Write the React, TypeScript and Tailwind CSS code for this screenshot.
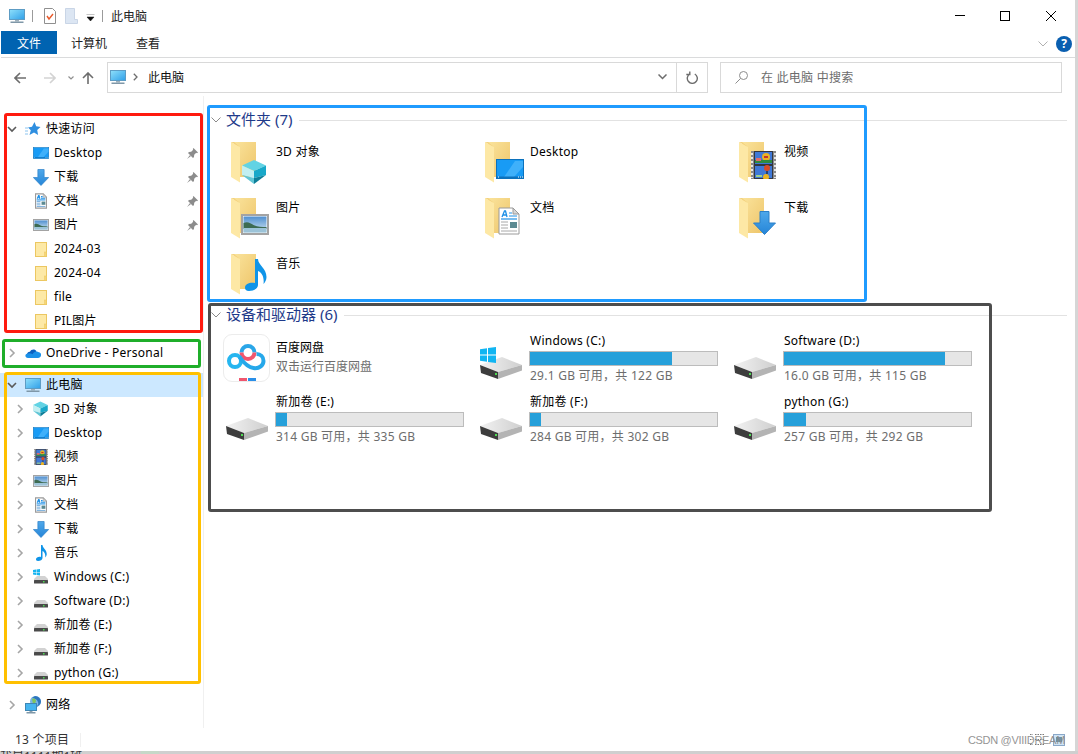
import React from 'react';

const FONT = "font-['Noto_Sans','Noto_Sans_CJK_SC',sans-serif]";

function Chevron({ open }: { open?: boolean }) {
  return open ? (
    <svg width="12" height="12" viewBox="0 0 12 12" fill="none" stroke="#5a5a5a" strokeWidth="1.6">
      <path d="M2 4l4 4 4-4" />
    </svg>
  ) : (
    <svg width="12" height="12" viewBox="0 0 12 12" fill="none" stroke="#a6a6a6" strokeWidth="1.6">
      <path d="M4 2l4 4-4 4" />
    </svg>
  );
}

function PcIcon({ className }: { className?: string }) {
  return (
    <svg className={className} width="16" height="16" viewBox="0 0 16 16">
      <defs>
        <linearGradient id="pc" x1="0" y1="0" x2="1" y2="1">
          <stop offset="0" stopColor="#8fe0fb" />
          <stop offset="1" stopColor="#2f9fe8" />
        </linearGradient>
      </defs>
      <rect x="0.5" y="1.5" width="15" height="10" fill="url(#pc)" stroke="#5d9cc4" />
      <rect x="6" y="12" width="4" height="1.5" fill="#9fb0bb" />
      <rect x="1.5" y="13.5" width="13" height="1.5" fill="#7f97a8" />
    </svg>
  );
}

function DesktopGlyph({ w = 28, h = 20 }: { w?: number; h?: number }) {
  return (
    <svg width={w} height={h} viewBox="0 0 28 20">
      <rect x="0.5" y="0.5" width="27" height="19" fill="#189bf5" stroke="#0c72bd" />
      <path d="M8 18L19 2h8v6L18 18z" fill="#3fb0fa" />
      <rect x="1" y="17.5" width="26" height="1.5" fill="#0c72bd" />
      <path d="M2 18h1M22 18h1M24 18h1M26 18h1" stroke="#fff" strokeWidth="1" />
    </svg>
  );
}

function CubeGlyph({ w = 26, h = 24 }: { w?: number; h?: number }) {
  return (
    <svg width={w} height={h} viewBox="0 0 26 24">
      <path d="M12 0l12 5.5L12 11 0 5.5z" fill="#62d3e4" />
      <path d="M0 5.5L12 11v7L0 15z" fill="#c2eff2" />
      <path d="M24 5.5L12 11v7l12-3z" fill="#18a8c9" />
      <path d="M0 15l12 3v6z" fill="#62c6d6" />
      <path d="M24 15l-12 3v6z" fill="#0e7f99" />
    </svg>
  );
}

function FilmGlyph({ w = 25, h = 28 }: { w?: number; h?: number }) {
  return (
    <svg width={w} height={h} viewBox="0 0 25 28">
      <rect x="0" y="0" width="25" height="28" fill="#8a8a8a" />
      <rect x="3" y="0" width="19" height="28" fill="#33363f" />
      <rect x="4" y="1" width="17" height="12" fill="#3f78d6" />
      <rect x="4" y="15" width="17" height="12" fill="#3f78d6" />
      <circle cx="15" cy="6" r="4" fill="#e9b322" />
      <rect x="13" y="5" width="4" height="2" fill="#c7322a" />
      <rect x="4" y="9" width="17" height="3" fill="#2e8b3d" />
      <rect x="5" y="7" width="5" height="3" fill="#e06a6a" />
      <circle cx="16" cy="17" r="3" fill="#d84a26" />
      <path d="M15.5 20h1v3h-1z" fill="#111" />
      <circle cx="15" cy="26" r="3" fill="#e9b322" />
      <rect x="5" y="24" width="6" height="2" fill="#9ed08a" />
      <path d="M1 2v2M1 6v2M1 10v2M1 14v2M1 18v2M1 22v2M1 26v1M24 2v2M24 6v2M24 10v2M24 14v2M24 18v2M24 22v2M24 26v1" stroke="#e6e6e6" strokeWidth="2" />
    </svg>
  );
}

function PictureGlyph({ w = 28, h = 21 }: { w?: number; h?: number }) {
  return (
    <svg width={w} height={h} viewBox="0 0 28 21">
      <defs>
        <linearGradient id="sky" x1="0" y1="0" x2="0" y2="1">
          <stop offset="0" stopColor="#4f8fd0" />
          <stop offset="1" stopColor="#d3e7f2" />
        </linearGradient>
      </defs>
      <rect x="1" y="1" width="26" height="19" fill="#fff" stroke="#a3a3a3" strokeWidth="2" />
      <rect x="2.5" y="2.5" width="23" height="16" fill="url(#sky)" />
      <path d="M2.500 9c4-2 7 0 10 2 4 2 8 2 13 2v2h-23z" fill="#3d6b52" />
      <rect x="2.5" y="14" width="23" height="4.500" fill="#9cc3d8" />
    </svg>
  );
}

function DocGlyph({ w = 22, h = 28, small }: { w?: number; h?: number; small?: boolean }) {
  return (
    <svg width={w} height={h} viewBox="0 0 22 28">
      <path d="M1 1H15L21 7V27H1z" fill="#fff" stroke="#9a9a9a" strokeWidth={small ? 2 : 1} />
      <path d="M15 1V7H21z" fill="#d6d6d6" stroke="#9a9a9a" />
      <path d="M4 10l2.500-6h1L9 10M5 8h3.500" stroke="#1e90e6" strokeWidth={small ? 2 : 1.3} fill="none" />
      <path d="M11 6h3M11 9h8" stroke="#1e90e6" strokeWidth={small ? 2 : 1} />
      <path d="M3 12h16" stroke="#1e90e6" strokeWidth={small ? 2 : 1.2} />
      <path d="M3 15h7M3 18h7M3 21h7M3 24h16" stroke={small ? '#6aa5d8' : '#a8a8a8'} strokeWidth={small ? 1.6 : 1} />
      <rect x="12" y="15" width="7" height="6" fill="#5c8a92" />
    </svg>
  );
}

function MusicGlyph({ w = 22, h = 32 }: { w?: number; h?: number }) {
  return (
    <svg width={w} height={h} viewBox="0 0 22 32">
      <path d="M10 0h3c0 6 8.500 9 8.500 18 0 3-1.500 5.500-3 7 1-7-2-12-5.500-13v14c0 3.500-4.500 6-9 6-3 0-4-1.500-4-3.500 0-3.500 5-5.500 10-4.500z" fill="#0f94e8" />
    </svg>
  );
}

function DownloadGlyph({ w = 23, h = 24 }: { w?: number; h?: number }) {
  return (
    <svg width={w} height={h} viewBox="0 0 23 24">
      <defs>
        <linearGradient id="dl" x1="0" y1="0" x2="0" y2="1">
          <stop offset="0" stopColor="#4fa8ea" />
          <stop offset="1" stopColor="#2585d8" />
        </linearGradient>
      </defs>
      <path d="M7 0.500h9V12h6.500L11.500 23.500 0.500 12H7z" fill="url(#dl)" stroke="#2c80c8" />
    </svg>
  );
}

function SmallFolder() {
  return (
    <svg width="12" height="15" viewBox="0 0 12 15">
      <rect x="0.500" y="0.500" width="11" height="14" fill="#fde9a6" stroke="#ecc761" />
      <rect x="9.500" y="10" width="2" height="4.500" fill="#f6d677" stroke="#ecc761" strokeWidth="0.500" />
    </svg>
  );
}

function SmallDrive({ win }: { win?: boolean }) {
  return (
    <svg width="16" height="16" viewBox="0 0 16 16">
      {win && <path d="M0 1l3-.500V3H0zM3.500 0.400L7 0v3H3.500zM0 3.500h3V6L0 5.500zM3.500 3.500H7V6.500L3.500 6z" fill="#15b4f0" />}
      <path d="M4 7h8l3 3v1H1v-1z" fill="#d2d2d2" />
      <rect x="1" y="11" width="14" height="3.500" rx="0.500" fill="#4a4a4a" />
      <rect x="10" y="12" width="1.500" height="1.500" fill="#4ddb52" />
    </svg>
  );
}

function Cloud() {
  return (
    <svg width="16" height="16" viewBox="0 0 16 16">
      <path d="M2 10.500C1.500 8 3.500 6.500 5 6.800 6 4 10 3.500 11.500 6.200L7 11z" fill="#0a5fc0" />
      <path d="M3 13c-3 0-3.500-3.500-1-4.200C3.500 8 6 8 7.500 9.200 9 7 11 6 13 7c2.500.2 3.500 2 3 3.500-.2 1.500-1.500 2.500-3 2.500z" fill="#1a90e8" />
    </svg>
  );
}

function Network() {
  return (
    <svg width="16" height="18" viewBox="0 0 16 18">
      <circle cx="10.500" cy="5.500" r="5.500" fill="#7ab4e6" />
      <path d="M7 2c2 0 5 1 6 4s-1 4-2 5c3-1 5-3 5-5.500S13 0 10 0z" fill="#2d76bd" />
      <path d="M7 3c2-1 4 0 4 2s-2 2-3 3z" fill="#7fc45e" />
      <rect x="0.500" y="7.500" width="11" height="7" fill="#45b4ef" stroke="#3e87b5" />
      <rect x="4.500" y="15" width="3" height="1" fill="#8ea1ad" />
      <rect x="1.500" y="16" width="9" height="1.500" fill="#7f97a8" />
    </svg>
  );
}

function Pin() {
  return (
    <svg width="11" height="11" viewBox="0 0 11 11" fill="#8c8c8c">
      <path d="M6.500 0L11 4.500 10 5.200 9.200 4.800 7.200 6.800 7 9 6 10 1 5l1-1 2.200-.200 2-2-.400-.800z" />
      <path d="M0 11l3-4 1 1z" />
    </svg>
  );
}

function Star() {
  return (
    <svg width="16" height="16" viewBox="0 0 16 16">
      <path d="M9.500 1l1.700 4.300L15.500 6l-3.300 3 .9 5-4.100-2.500L4.500 14l1.300-4.800L3 6.500l4-.8z" fill="#2f8fe0" />
      <path d="M0 7h3M0 10h3M0 13h3" stroke="#8cc4ef" strokeWidth="1" />
    </svg>
  );
}

function LargeFolder({ children }: { children?: React.ReactNode }) {
  return (
    <div className="relative w-[44px] h-[44px] ml-[3px] mt-[4px] mr-[1px] shrink-0">
      <svg width="26" height="41" viewBox="0 0 26 41">
        <defs>
          <linearGradient id="fb" x1="0" y1="0" x2="1" y2="1">
            <stop offset="0" stopColor="#fae39b" />
            <stop offset="1" stopColor="#eec56a" />
          </linearGradient>
        </defs>
        <rect x="3" y="0" width="22" height="35" fill="url(#fb)" />
        <path d="M0 0l9 5v35.500L0 35z" fill="#fde8a5" />
        <path d="M0 0h3l6 5z" fill="#f3d27e" />
      </svg>
      {children}
    </div>
  );
}

function Ring({ className }: { className: string }) {
  return <div className={className} />;
}

function SidebarRow({
  level,
  chevron,
  icon,
  label,
  pin,
  selected,
}: {
  level: 0 | 1;
  chevron?: 'open' | 'closed';
  icon: React.ReactNode;
  label: string;
  pin?: boolean;
  selected?: boolean;
}) {
  return (
    <div
      className={`flex items-center h-6 text-[12px] text-black ${level === 0 ? 'pl-[6px]' : 'pl-[14px]'} ${
        selected ? 'bg-[#cce8ff]' : ''
      }`}
    >
      <div className="w-3 h-3 shrink-0">{chevron && <Chevron open={chevron === 'open'} />}</div>
      <div className="w-4 ml-[7px] flex justify-center shrink-0">{icon}</div>
      <span className="ml-[5px] whitespace-nowrap tracking-[0.25px]">{label}</span>
      {pin && (
        <span className="ml-auto mr-[5px]">
          <Pin />
        </span>
      )}
    </div>
  );
}

const quickAccess = [
  { icon: <DesktopGlyph w={16} h={12} />, label: 'Desktop', pin: true },
  { icon: <DownloadGlyph w={16} h={17} />, label: '下载', pin: true },
  { icon: <DocGlyph w={12} h={16} small />, label: '文档', pin: true },
  { icon: <PictureGlyph w={16} h={12} />, label: '图片', pin: true },
  { icon: <SmallFolder />, label: '2024-03' },
  { icon: <SmallFolder />, label: '2024-04' },
  { icon: <SmallFolder />, label: 'file' },
  { icon: <SmallFolder />, label: 'PIL图片' },
];

const pcItems = [
  { icon: <CubeGlyph w={16} h={16} />, label: '3D 对象' },
  { icon: <DesktopGlyph w={16} h={12} />, label: 'Desktop' },
  { icon: <FilmGlyph w={14} h={16} />, label: '视频' },
  { icon: <PictureGlyph w={16} h={12} />, label: '图片' },
  { icon: <DocGlyph w={12} h={16} small />, label: '文档' },
  { icon: <DownloadGlyph w={16} h={17} />, label: '下载' },
  { icon: <MusicGlyph w={11} h={16} />, label: '音乐' },
  { icon: <SmallDrive win />, label: 'Windows (C:)' },
  { icon: <SmallDrive />, label: 'Software (D:)' },
  { icon: <SmallDrive />, label: '新加卷 (E:)' },
  { icon: <SmallDrive />, label: '新加卷 (F:)' },
  { icon: <SmallDrive />, label: 'python (G:)' },
];

const folders = [
  { label: '3D 对象', overlay: <div className="absolute left-[11px] top-[18px]"><CubeGlyph /></div> },
  { label: 'Desktop', overlay: <div className="absolute left-[11px] top-[17px]"><DesktopGlyph /></div> },
  { label: '视频', overlay: <div className="absolute left-[12px] top-[9px]"><FilmGlyph /></div> },
  { label: '图片', overlay: <div className="absolute left-[10px] top-[16px]"><PictureGlyph /></div> },
  { label: '文档', overlay: <div className="absolute left-[13px] top-[9px]"><DocGlyph /></div> },
  { label: '下载', overlay: <div className="absolute left-[14px] top-[13px]"><DownloadGlyph /></div> },
  { label: '音乐', overlay: <div className="absolute left-[14px] top-[5px]"><MusicGlyph /></div> },
];

const drives = [
  { name: 'Windows (C:)', used: 76, usage: '29.1 GB 可用，共 122 GB', win: true },
  { name: 'Software (D:)', used: 86, usage: '16.0 GB 可用，共 115 GB' },
  { name: '新加卷 (E:)', used: 6, usage: '314 GB 可用，共 335 GB' },
  { name: '新加卷 (F:)', used: 6, usage: '284 GB 可用，共 302 GB' },
  { name: 'python (G:)', used: 12, usage: '257 GB 可用，共 292 GB' },
];

function LargeDrive() {
  return (
    <svg width="42" height="22" viewBox="0 0 42 22" className="-ml-[2px] mt-[25px]">
      <defs>
        <linearGradient id="dt" x1="0" y1="0" x2="1" y2="0">
          <stop offset="0" stopColor="#f2f2f2" />
          <stop offset="1" stopColor="#cfcfcf" />
        </linearGradient>
      </defs>
      <path d="M0 8L22 0l20 8-24 7z" fill="url(#dt)" />
      <path d="M0 8l18 7v7L1 16z" fill="#3d3d3d" />
      <path d="M18 15l24-7v5.500L18 22z" fill="#b4b4b4" />
      <rect x="15" y="16" width="2" height="2" fill="#4ddb52" />
    </svg>
  );
}

function BaiduLogo() {
  return (
    <div className="w-[47px] h-[48px] -ml-[5px] mt-[2px] rounded-[9px] border border-[#ececec] bg-white overflow-hidden shrink-0">
      <svg width="45" height="46" viewBox="0 0 45 46" fill="none">
        <path d="M17.500 17.500a6.500 6.500 0 0 1 13 0" stroke="#2aa6e8" strokeWidth="4" />
        <path d="M30.500 17.500a6.500 6.500 0 0 1-13 0" stroke="#f0566e" strokeWidth="4" />
        <circle cx="11" cy="26" r="6" stroke="#26b6f0" strokeWidth="4" />
        <path d="M15.500 22c3 4 7 10 14 11 6 1 10-3 10-7 0-4-3-7-7-7" stroke="#26a8ea" strokeWidth="4" />
        <rect x="15" y="43" width="8" height="3" fill="#f0566e" />
        <rect x="24" y="43" width="8" height="3" fill="#2a8fe8" />
      </svg>
    </div>
  );
}

function GroupHeader({ title }: { title: string }) {
  return (
    <div className="flex items-center h-6">
      <svg width="10" height="6" viewBox="0 0 10 6" fill="none" stroke="#8a8a8a" strokeWidth="1">
        <path d="M.5.500L5 5 9.500.500" />
      </svg>
      <span className="ml-[5px] -mt-[2px] text-[15px] text-[#1e3a8a] whitespace-nowrap">{title}</span>
      <div className="flex-1 ml-[7px] h-px bg-[#e2e2e2]" />
    </div>
  );
}

export default function App() {
  return (
    <div className={`w-[1078px] h-[754px] overflow-hidden bg-[#d6d6d6] flex flex-col ${FONT}`}>
      <div className="flex h-[751px] shrink-0">
        <div className="w-[1075px] bg-white flex flex-col">
          {/* title bar */}
          <div className="h-[31px] flex items-center shrink-0">
            <PcIcon className="ml-[9px]" />
            <div className="w-px h-[12px] bg-[#9b9b9b] ml-[7px]" />
            <svg width="12" height="16" viewBox="0 0 12 16" className="ml-[11px]">
              <path d="M.5.500h8l3 3v12H.5z" fill="#fff" stroke="#8f8f8f" />
              <path d="M3 8l2 3 4-5" stroke="#e8592a" strokeWidth="1.400" fill="none" />
            </svg>
            <svg width="13" height="16" viewBox="0 0 13 16" className="ml-[9px]">
              <path d="M.5.500h9v11h3v4H.5z" fill="#dce6f3" stroke="#c9d5e6" />
            </svg>
            <svg width="9" height="7" viewBox="0 0 9 7" className="ml-[8px] mt-[3px]">
              <path d="M.5 0h8M1 3h7L4.500 7z" fill="#111" stroke="#111" strokeWidth="0.500" />
            </svg>
            <div className="w-px h-[12px] bg-[#9b9b9b] ml-[7px]" />
            <span className="ml-[8px] mt-[2px] text-[12px] text-[#222]">此电脑</span>
            <div className="ml-auto flex items-center mr-[19px] gap-[35px]">
              <div className="w-[10px] h-px bg-black" />
              <div className="w-[10px] h-[10px] border border-black" />
              <svg width="10" height="10" viewBox="0 0 10 10" stroke="#000" strokeWidth="1" className="ml-[1px]">
                <path d="M0 0l10 10M10 0L0 10" />
              </svg>
            </div>
          </div>

          {/* ribbon tabs */}
          <div className="h-[27px] shrink-0 flex border-b border-[#dadbdc] ml-px text-[12px]">
            <div className="w-[56px] h-[23px] pt-[2px] bg-[#0063b1] text-white flex items-center justify-center">文件</div>
            <div className="ml-[14px] h-[23px] pt-[2px] flex items-center text-[#222]">计算机</div>
            <div className="ml-[29px] h-[23px] pt-[2px] flex items-center text-[#222]">查看</div>
            <div className="ml-auto flex items-center h-[23px] mr-[3px] mt-[1px]">
              <svg width="10" height="6" viewBox="0 0 10 6" fill="none" stroke="#b0b0b0">
                <path d="M.5.500L5 5 9.500.500" />
              </svg>
              <div className="ml-[8px] w-4 h-4 rounded-full bg-[#0a5fb0] text-white text-[12px] font-bold flex items-center justify-center">?</div>
            </div>
          </div>

          {/* address row */}
          <div className="h-[38px] shrink-0 flex items-center">
            <div className="w-[107px] flex items-center shrink-0 pl-[14px] pt-[2px]">
              <svg width="12" height="12" viewBox="0 0 12 12" fill="none" stroke="#6d6d6d" strokeWidth="1.600">
                <path d="M12 6H1M6 1L1 6l5 5" />
              </svg>
              <svg width="12" height="12" viewBox="0 0 12 12" fill="none" stroke="#d3d3d3" strokeWidth="1.600" className="ml-[18px]">
                <path d="M0 6h11M6 1l5 5-5 5" />
              </svg>
              <svg width="6" height="4" viewBox="0 0 6 4" fill="none" stroke="#8f8f8f" strokeWidth="1.200" className="ml-[12px]">
                <path d="M.5.500L3 3 5.500.500" />
              </svg>
              <svg width="12" height="12" viewBox="0 0 12 12" fill="none" stroke="#6d6d6d" strokeWidth="1.600" className="ml-[8px]">
                <path d="M6 12V1M1 6l5-5 5 5" />
              </svg>
            </div>
            <div className="w-[601px] h-[31px] border border-[#d9d9d9] flex items-center shrink-0 text-[12px]">
              <PcIcon className="ml-[2px]" />
              <svg width="5" height="8" viewBox="0 0 5 8" fill="none" stroke="#6d6d6d" strokeWidth="1.300" className="ml-[7px]">
                <path d="M.8.800L4 4 .8 7.200" />
              </svg>
              <span className="ml-[10px] mt-[2px] text-[#111]">此电脑</span>
              <svg width="9" height="6" viewBox="0 0 9 6" fill="none" stroke="#6d6d6d" strokeWidth="1.500" className="ml-auto mr-[9px]">
                <path d="M.5.500L4.500 4.500 8.500.500" />
              </svg>
              <div className="w-[31px] h-full border-l border-[#d9d9d9] flex items-center justify-center">
                <svg width="12" height="13" viewBox="0 0 12 13" fill="none" stroke="#6d6d6d" strokeWidth="1.400">
                  <path d="M8.500 2.500a5 5 0 1 1-5 0M3.500 0v3H0" transform="translate(.3 .5)" />
                </svg>
              </div>
            </div>
            <div className="ml-[12px] w-[342px] h-[31px] border border-[#d9d9d9] flex items-center shrink-0 text-[12px] text-[#6d6d6d]">
              <svg width="13" height="13" viewBox="0 0 13 13" fill="none" stroke="#8c8c8c" className="ml-[14px]">
                <circle cx="8.500" cy="4.500" r="4" />
                <path d="M5.500 7.500L.5 12.500" />
              </svg>
              <span className="ml-[13px] mt-[2px] tracking-[0.25px]">在 此电脑 中搜索</span>
            </div>
          </div>

          {/* main */}
          <div className="flex-1 flex min-h-0">
            <div className="w-[204px] shrink-0 border-r border-[#f0f0f0] pt-[21px]">
              <div className="relative">
                <Ring className="absolute -top-[4px] bottom-0 left-[4px] right-0 border-[3px] border-[#ff1a0f] rounded-[3px] pointer-events-none" />
                <SidebarRow level={0} chevron="open" icon={<Star />} label="快速访问" />
                {quickAccess.map((r) => (
                  <SidebarRow key={r.label} level={1} icon={r.icon} label={r.label} pin={r.pin} />
                ))}
              </div>
              <div className="relative mt-[8px]">
                <Ring className="absolute -top-[2px] -bottom-[3px] left-[2px] right-[2px] border-[3px] border-[#1fae2a] rounded-[3px] pointer-events-none" />
                <SidebarRow level={0} chevron="closed" icon={<Cloud />} label="OneDrive - Personal" />
              </div>
              <div className="relative mt-[8px]">
                <Ring className="absolute -top-px bottom-px left-[4px] right-[2px] border-[3px] border-[#ffc000] rounded-[3px] pointer-events-none" />
                <SidebarRow level={0} chevron="open" icon={<PcIcon />} label="此电脑" selected />
                {pcItems.map((r) => (
                  <SidebarRow key={r.label} level={1} chevron="closed" icon={r.icon} label={r.label} />
                ))}
              </div>
              <div className="mt-[8px]">
                <SidebarRow level={0} chevron="closed" icon={<Network />} label="网络" />
              </div>
            </div>

            <div className="flex-1 pl-[7px] pr-[8px] pt-[12px] min-w-0">
              <div className="relative">
                <Ring className="absolute -top-[3px] -left-[4px] w-[660px] h-[197px] border-[3px] border-[#1f9bff] rounded-[3px] pointer-events-none" />
                <GroupHeader title="文件夹 (7)" />
                <div className="mt-[6px] ml-[17px] grid grid-cols-[254px_254px_254px] grid-rows-[56px_56px_53px]">
                  {folders.map((f) => (
                    <div key={f.label} className="flex text-[12px] text-black">
                      <LargeFolder>{f.overlay}</LargeFolder>
                      <span className="mt-[5px] tracking-[0.25px]">{f.label}</span>
                    </div>
                  ))}
                </div>
              </div>

              <div className="relative">
                <Ring className="absolute top-0 -left-[3px] w-[784px] h-[209px] border-[3px] border-[#4d4d4d] rounded-[3px] pointer-events-none" />
                <GroupHeader title="设备和驱动器 (6)" />
                <div className="mt-[5px] ml-[17px] grid grid-cols-[254px_254px_254px] auto-rows-[61px] text-[12px]">
                  <div className="flex">
                    <BaiduLogo />
                    <div className="ml-[6px] mt-[7px] leading-[18px] whitespace-nowrap">
                      <div className="text-black">百度网盘</div>
                      <div className="mt-px text-[#6d6d6d]">双击运行百度网盘</div>
                    </div>
                  </div>
                  {drives.map((d) => (
                    <div key={d.name} className="flex">
                      <div className="relative w-[47px] shrink-0">
                        {d.win && (
                          <svg width="16" height="16" viewBox="0 0 16 16" className="absolute -left-[2px] top-[15px]">
                            <path d="M0 2.200L7 1.200V7.500H0zM8 1l8-1v7.500H8zM0 8.500h7v6.300L0 13.800zM8 8.500h8V16l-8-1z" fill="#11b5f2" />
                          </svg>
                        )}
                        <LargeDrive />
                      </div>
                      <div className="w-[189px] leading-[18px] tracking-[0.25px]">
                        <div className="pl-px text-black whitespace-nowrap">{d.name}</div>
                        <div className="h-[15px] mt-px border border-[#bcbcbc] bg-[#e6e6e6]">
                          <div className="h-full bg-[#26a0da]" style={{ width: `${d.used}%` }} />
                        </div>
                        <div className="pl-px mt-px text-[#6d6d6d] whitespace-nowrap">{d.usage}</div>
                      </div>
                    </div>
                  ))}
                </div>
              </div>
            </div>
          </div>

          {/* status bar */}
          <div className="h-[23px] shrink-0 flex items-center text-[12px] text-[#333] pl-[15px] relative">
            <span className="tracking-[0.25px]">13 个项目</span>
            <div className="ml-[11px] w-px h-[14px] bg-[#f0f0f0]" />
            <div className="ml-auto mr-[10px] flex items-center gap-[8px]">
              <svg width="15" height="13" viewBox="0 0 15 13" fill="none" stroke="#7a7a7a" strokeDasharray="1.500 1">
                <path d="M0 1.500h3M5 1.500h10M0 6.500h3M5 6.500h10M0 11.500h3M5 11.500h10" />
              </svg>
              <div className="w-[12px] h-[12px] border border-[#8aa8c8] bg-[#cfe4f5] flex items-center justify-center">
                <div className="w-[6px] h-[5px] bg-[#6f93a8]" />
              </div>
            </div>
            <span className="absolute right-[10px] top-[4px] text-[11px] tracking-[-0.3px] text-[#8a8a8a] font-['Liberation_Sans',sans-serif] opacity-90">
              CSDN @VIIIDREAM
            </span>
          </div>
        </div>
        <div className="w-[3px] bg-[#d6d6d6]" />
      </div>
      <div className="h-[3px] flex bg-[#cfcfcf] overflow-hidden text-[12px] leading-[12px] text-[#333] whitespace-nowrap">
        <div className="w-[141px] shrink-0">我是1111期1班</div>
        <div className="w-[18px] bg-[#c6d8c8]" />
      </div>
    </div>
  );
}
